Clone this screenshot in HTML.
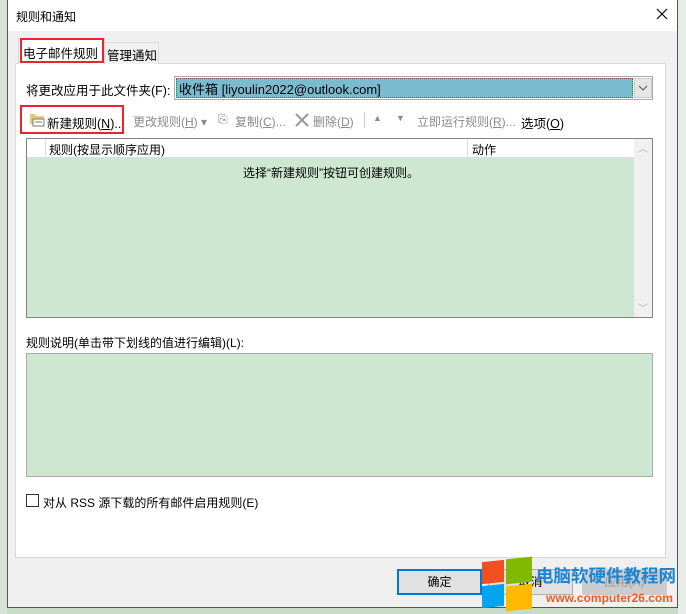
<!DOCTYPE html>
<html><head><meta charset="utf-8"><style>
*{box-sizing:border-box;margin:0;padding:0}
body{width:686px;height:614px;overflow:hidden;background:#c8dcc8;font-family:"Liberation Sans","Noto Sans CJK SC",sans-serif;font-size:12px;color:#000;position:relative}
.abs{position:absolute}
.dlg{left:7px;top:-1px;width:671px;height:609px;background:#f0f0f0;border:1px solid #555}
.u{text-decoration:underline}
.g{color:#8a8a8a}
</style></head><body>
<div class="abs" style="left:0;top:0;width:7px;height:614px;background:#d6e2d6"></div>
<div class="abs" style="left:678px;top:0;width:8px;height:614px;background:#e8ece8"></div>
<div class="abs dlg"></div>
<div class="abs" style="left:8px;top:0;width:669px;height:31px;background:#fff"></div>
<div class="abs" style="left:16px;top:8px;font-size:12px">规则和通知</div>
<svg class="abs" style="left:656px;top:8px" width="12" height="12"><path d="M1 1L11 11M11 1L1 11" stroke="#000" stroke-width="1.2"/></svg>
<div class="abs" style="left:15px;top:63px;width:651px;height:495px;background:#fff;border:1px solid #d9d9d9"></div>
<div class="abs" style="left:104px;top:42px;width:55px;height:22px;background:#f0f0f0;border:1px solid #d9d9d9;border-bottom:none"></div>
<div class="abs" style="left:107px;top:45px;font-size:12.5px">管理通知</div>
<div class="abs" style="left:18px;top:38px;width:87px;height:26px;background:#fff;border:1px solid #d9d9d9;border-bottom:none"></div>
<div class="abs" style="left:20px;top:38px;width:84px;height:25px;border:2px solid #e8252c"></div>
<div class="abs" style="left:23px;top:43px;font-size:12.5px">电子邮件规则</div>
<div class="abs" style="left:26px;top:80px;font-size:12.5px">将更改应用于此文件夹(F):</div>
<div class="abs" style="left:174px;top:76px;width:479px;height:24px;border:1px solid #aaa;background:#fff"></div>
<div class="abs" style="left:176px;top:78px;width:457px;height:20px;background:#7abbd0;border:1px dotted #b33"></div>
<div class="abs" style="left:179px;top:79px;font-size:13px">收件箱 [liyoulin2022@outlook.com]</div>
<div class="abs" style="left:634px;top:78px;width:18px;height:20px;background:#e6e6e6;border:1px solid #ccc"></div>
<svg class="abs" style="left:638px;top:85px" width="10" height="6"><path d="M1 1L5 5L9 1" stroke="#555" fill="none"/></svg>
<div class="abs" style="left:20px;top:105px;width:104px;height:29px;border:2px solid #e8252c"></div>
<svg class="abs" style="left:29px;top:112px" width="16" height="15"><path d="M1 2h5l1 2h8v8H1z" fill="#e8c878"/><rect x="4" y="7" width="11" height="7" fill="#fff" stroke="#777"/><path d="M6 10h7" stroke="#777"/></svg>
<div class="abs" style="left:47px;top:113px;font-size:12.5px">新建规则(<span class="u">N</span>)..</div>
<div class="abs g" style="left:133px;top:113px">更改规则(<span class="u">H</span>) ▾</div>
<div class="abs g" style="left:218px;top:112px">⎘</div>
<div class="abs g" style="left:235px;top:113px">复制(<span class="u">C</span>)...</div>
<svg class="abs" style="left:295px;top:113px" width="14" height="14"><path d="M1 1L13 13M13 1L1 13" stroke="#999" stroke-width="2"/></svg>
<div class="abs g" style="left:313px;top:113px">删除(<span class="u">D</span>)</div>
<div class="abs" style="left:364px;top:112px;width:1px;height:16px;background:#ccc"></div>
<div class="abs g" style="left:373px;top:113px;font-size:9px">▲</div>
<div class="abs g" style="left:396px;top:113px;font-size:9px">▼</div>
<div class="abs g" style="left:417px;top:113px">立即运行规则(<span class="u">R</span>)...</div>
<div class="abs" style="left:521px;top:113px;font-size:12.5px">选项(<span class="u">O</span>)</div>
<div class="abs" style="left:26px;top:138px;width:627px;height:180px;border:1px solid #828282;background:#cde7d0"></div>
<div class="abs" style="left:27px;top:139px;width:607px;height:19px;background:#fff;border-bottom:1px solid #ddd"></div>
<div class="abs" style="left:45px;top:139px;width:1px;height:19px;background:#ddd"></div>
<div class="abs" style="left:467px;top:139px;width:1px;height:19px;background:#ddd"></div>
<div class="abs" style="left:49px;top:141px">规则(按显示顺序应用)</div>
<div class="abs" style="left:472px;top:141px">动作</div>
<div class="abs" style="left:634px;top:139px;width:18px;height:178px;background:#f0f0f0"></div>
<div class="abs" style="left:638px;top:140px;color:#aaa;font-size:10px">︿</div>
<div class="abs" style="left:638px;top:300px;color:#aaa;font-size:10px">﹀</div>
<div class="abs" style="left:243px;top:164px">选择“新建规则”按钮可创建规则。</div>
<div class="abs" style="left:26px;top:334px">规则说明(单击带下划线的值进行编辑)(L):</div>
<div class="abs" style="left:26px;top:353px;width:627px;height:124px;border:1px solid #aaa;background:#cde7d0"></div>
<div class="abs" style="left:26px;top:494px;width:13px;height:13px;border:1px solid #333;background:#fff"></div>
<div class="abs" style="left:43px;top:494px">对从 RSS 源下载的所有邮件启用规则(E)</div>
<div class="abs" style="left:397px;top:569px;width:85px;height:26px;border:2px solid #0078d7;background:#e1e1e1;text-align:center;line-height:22px">确定</div>
<div class="abs" style="left:488px;top:569px;width:85px;height:26px;border:1px solid #adadad;background:#e1e1e1;text-align:center;line-height:24px">取消</div>
<div class="abs" style="left:582px;top:569px;width:85px;height:26px;border:1px solid #ccc;background:#ccc;color:#999;text-align:center;line-height:24px">应用(A)</div>
<div class="abs" style="left:482px;top:561px;width:22px;height:22px;background:#f25022;transform:skewY(-6deg)"></div>
<div class="abs" style="left:506px;top:558px;width:26px;height:25px;background:#7fba00;transform:skewY(-6deg)"></div>
<div class="abs" style="left:482px;top:585px;width:22px;height:22px;background:#00a4ef;transform:skewY(-6deg)"></div>
<div class="abs" style="left:506px;top:585px;width:26px;height:25px;background:#ffb900;transform:skewY(-6deg)"></div>
<div class="abs" style="left:536px;top:563px;color:#1b86d6;font-size:17.5px;font-weight:bold;letter-spacing:0">电脑软硬件教程网</div>
<div class="abs" style="left:546px;top:591px;color:#f05a22;font-size:12px;font-weight:bold">www.computer26.com</div>
</body></html>
